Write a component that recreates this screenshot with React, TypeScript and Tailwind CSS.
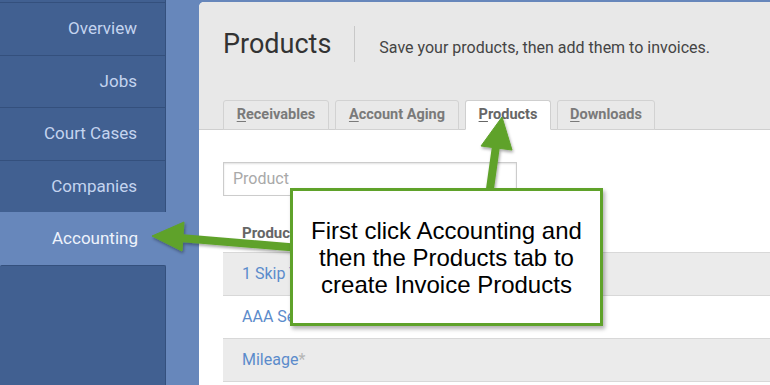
import React from "react";

const navItems = [
  { label: "Overview", h: "h-[53px]" },
  { label: "Jobs", h: "h-[52px]" },
  { label: "Court Cases", h: "h-[53px]" },
  { label: "Companies", h: "h-[52px]" },
];

const tabs = [
  { label: "Receivables", w: "w-[106px]", active: false },
  { label: "Account Aging", w: "w-[124px]", active: false },
  { label: "Products", w: "w-[86px]", active: true },
  { label: "Downloads", w: "w-[98px]", active: false },
];

const rows = [
  { name: "1 Skip Trace", star: false, gray: true },
  { name: "AAA Service", star: false, gray: false },
  { name: "Mileage", star: true, gray: true },
];

export default function App() {
  return (
    <div className="relative w-[770px] h-[385px] overflow-hidden bg-[#6787bb] flex font-['Roboto',sans-serif]">
      {/* Sidebar */}
      <aside className="w-[166px] shrink-0 flex flex-col">
        <div className="h-[2px] bg-[#416091] border-r border-[#34507d]" />
        {navItems.map((it) => (
          <div
            key={it.label}
            className={`${it.h} bg-[#416091] border-t border-r border-[#34507d] flex items-center justify-end pr-[28px] text-[17px] text-[#c4d4ef]`}
          >
            {it.label}
          </div>
        ))}
        <div className="h-[53px] w-[199px] flex items-center justify-end pr-[61px] text-[17px] text-[#eef3fb]">
          Accounting
        </div>
        <div className="flex-1 bg-[#416091] border-t border-r border-[#34507d] rounded-t-[2px]" />
      </aside>

      {/* Main panel */}
      <main className="ml-[33px] mt-[2px] flex-1 bg-white rounded-tl-[5px] overflow-hidden flex flex-col">
        <header className="h-[128px] shrink-0 bg-[#e8e8e8] border-b border-[#cfcfcf] flex flex-col px-[24px]">
          <div className="flex items-center mt-[23px] h-[38px]">
            <h1 className="text-[27px] leading-none text-[#333]">Products</h1>
            <div className="ml-[23px] w-px h-[36px] bg-[#c8c8c8]" />
            <p className="ml-[24px] mt-[8px] text-[16px] text-[#444]">
              Save your products, then add them to invoices.
            </p>
          </div>
          <nav className="mt-auto flex gap-[6px] -mb-px">
            {tabs.map((t) => (
              <div
                key={t.label}
                className={`${t.w} h-[30px] rounded-t-[3px] border flex items-center justify-center text-[14.5px] font-bold ${
                  t.active
                    ? "bg-white border-[#cfcfcf] border-b-white text-[#666]"
                    : "bg-[#e9e9e9] border-[#d2d2d2] text-[#7a7a7a]"
                }`}
              >
                <span>
                  <span className="underline underline-offset-2">{t.label[0]}</span>
                  {t.label.slice(1)}
                </span>
              </div>
            ))}
          </nav>
        </header>

        <section className="px-[24px] pt-[32px] flex flex-col">
          <div className="w-[294px] h-[34px] border border-[#cccccc] shadow-[inset_0_1px_2px_rgba(0,0,0,0.12)] flex items-center pl-[9px] text-[16px] text-[#a9a9a9]">
            Product
          </div>
          <div className="mt-[18px] w-[600px]">
            <div className="h-[38px] flex items-center pl-[19px] text-[15px] font-bold text-[#666]">
              Product
            </div>
            {rows.map((r) => (
              <div
                key={r.name}
                className={`h-[43px] border-t border-[#d8d8d8] flex items-center pl-[19px] text-[16px] text-[#5b8bcb] ${
                  r.gray ? "bg-[#ebebeb]" : "bg-white"
                }`}
              >
                {r.name}
                {r.star && <span className="text-[#b5b5b5]">*</span>}
              </div>
            ))}
            <div className="border-t border-[#d8d8d8]" />
          </div>
        </section>
      </main>

      {/* Arrows */}
      <svg className="absolute inset-0 pointer-events-none" width="770" height="385" viewBox="0 0 770 385">
        <defs>
          <filter id="sh" x="-20%" y="-20%" width="140%" height="140%">
            <feDropShadow dx="1" dy="2" stdDeviation="1.5" floodColor="#000" floodOpacity="0.35" />
          </filter>
        </defs>
        <g filter="url(#sh)" fill="#5fa22a" stroke="#5fa22a">
          <line x1="180" y1="238" x2="300" y2="248" strokeWidth="8" strokeLinecap="round" />
          <polygon points="152,236 184,222 182,251" strokeWidth="1" strokeLinejoin="round" />
          <line x1="496" y1="146" x2="489" y2="196" strokeWidth="8" strokeLinecap="round" />
          <polygon points="502,117 481,146 512,150" strokeWidth="1" strokeLinejoin="round" />
        </g>
      </svg>

      {/* Callout */}
      <div className="absolute left-[290px] top-[188px] w-[313px] h-[138px] bg-white border-[3px] border-[#5fa22a] shadow-[2px_3px_4px_rgba(0,0,0,0.3)] flex items-center justify-center text-center font-['Liberation_Sans',Arial,sans-serif] text-[24px] leading-[27px] text-black">
        <p>
          First click Accounting and
          <br />
          then the Products tab to
          <br />
          create Invoice Products
        </p>
      </div>
    </div>
  );
}
